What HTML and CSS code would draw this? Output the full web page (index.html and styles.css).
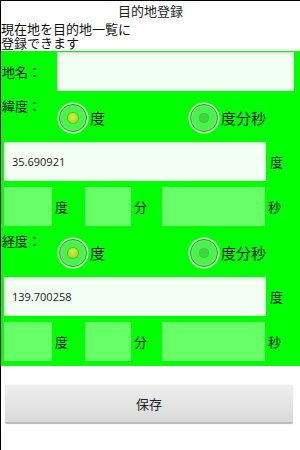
FILE: index.html
```html
<!DOCTYPE html>
<html lang="ja">
<head>
    <meta charset="UTF-8">
    <meta name="viewport" content="width=device-width, initial-scale=1.0">
    <title>目的地登録</title>
    <link rel="stylesheet" href="styles.css">
</head>
<body>
    <div class="title">目的地登録</div>
    <div class="intro">現在地を目的地一覧に<br>登録できます</div>

    <div class="form">
        <div class="name-row">
            <span class="label">地名：</span>
            <input class="field name-field" type="text">
        </div>

        <!-- 緯度 -->
        <div class="coord-head">
            <span class="label">緯度：</span>
            <div class="radios">
                <span class="radio checked"><i></i>度</span>
                <span class="radio"><i></i>度分秒</span>
            </div>
        </div>
        <div class="deg-row">
            <input class="field wide" type="text" value="35.690921">
            <span class="unit">度</span>
        </div>
        <div class="dms-row">
            <input class="box box-d" type="text">
            <span class="unit">度</span>
            <input class="box box-m" type="text">
            <span class="unit">分</span>
            <input class="box box-s" type="text">
            <span class="unit">秒</span>
        </div>

        <!-- 経度 -->
        <div class="coord-head">
            <span class="label">経度：</span>
            <div class="radios">
                <span class="radio checked"><i></i>度</span>
                <span class="radio"><i></i>度分秒</span>
            </div>
        </div>
        <div class="deg-row">
            <input class="field wide" type="text" value="139.700258">
            <span class="unit">度</span>
        </div>
        <div class="dms-row">
            <input class="box box-d" type="text">
            <span class="unit">度</span>
            <input class="box box-m" type="text">
            <span class="unit">分</span>
            <input class="box box-s" type="text">
            <span class="unit">秒</span>
        </div>
    </div>

    <div class="actions">
        <button class="save-btn">保存</button>
    </div>
</body>
</html>
```

FILE: styles.css
```css
* {
    margin: 0;
    padding: 0;
    box-sizing: border-box;
    font-family: "Noto Sans CJK JP", "Open Sans", sans-serif;
}
html, body {
    width: 300px;
    height: 450px;
    overflow: hidden;
}
body {
    background-color: #ffffff;
    color: #111111;
    border-top: 1px solid #000000;
    border-left: 1px solid #000000;
    font-size: 13px;
}
.title {
    text-align: center;
    line-height: 16px;
    padding-top: 2px;
    color: #222222;
}
.intro {
    line-height: 14px;
    padding-top: 3px;
    height: 32px;
}
.form {
    background-color: #00ff00;
    padding: 1px 6px 5px 0;
}
.label {
    padding-left: 1px;
    line-height: 13px;
}
.name-row {
    display: flex;
    align-items: center;
    height: 39px;
}
.name-row .label {
    width: 56px;
}
.field {
    height: 39px;
    border: 1px solid #d6f2d6;
    border-top-color: #c8e4c8;
    background-color: #f4fff4;
    box-shadow: inset 0 2px 2px rgba(0, 0, 0, 0.05);
    font-family: "Open Sans", sans-serif;
    font-size: 11px;
    color: #222222;
    padding-left: 7px;
    outline: none;
}
.name-field {
    flex: 1;
}
.coord-head {
    display: flex;
    height: 51px;
}
.coord-head .label {
    width: 56px;
    padding-top: 8px;
}
.radios {
    display: grid;
    grid-template-columns: 131px auto;
    padding-top: 13px;
    margin-left: 2px;
    align-items: start;
}
.radio {
    display: flex;
    align-items: center;
    gap: 3px;
    font-size: 15px;
    line-height: 28px;
    color: #111111;
}
.radio i {
    position: relative;
    width: 28px;
    height: 28px;
    border-radius: 50%;
    background-color: #4cf24c;
    border: 1.5px solid #2f952f;
    box-shadow: 0 0 0 1.5px rgba(230, 255, 230, 0.85), inset 0 0 2px rgba(255, 255, 255, 0.5);
}
.radio i::after {
    content: "";
    position: absolute;
    left: 50%;
    top: 50%;
    width: 10px;
    height: 10px;
    margin: -5px 0 0 -5px;
    border-radius: 50%;
    background-color: #3ed63e;
    box-shadow: inset 0 0 1px rgba(0, 100, 0, 0.4);
}
.radio.checked i::after {
    background: radial-gradient(circle at 45% 40%, #d8ef40, #9ccc10);
    box-shadow: 0 0 0 1px rgba(60, 130, 0, 0.4);
}
.deg-row {
    display: flex;
    align-items: center;
    padding-left: 3px;
}
.wide {
    width: 262px;
}
.unit {
    margin-left: 4px;
    width: 15px;
}
.dms-row {
    display: flex;
    align-items: center;
    padding-left: 3px;
    margin-top: 6px;
}
.box {
    height: 39px;
    background-color: #66ff66;
    border: 1px solid #7dfb7d;
    outline: none;
}
.dms-row .unit {
    margin-left: 3px;
}
.box-d { width: 48px; }
.box-m { width: 46px; margin-left: 15px; }
.box-s { width: 103px; margin-left: 13px; }
.actions {
    padding: 19px 0 0 4px;
}
.save-btn {
    width: 288px;
    height: 39px;
    border: none;
    border-radius: 2px;
    background: linear-gradient(#efefef, #d9d9d9);
    border-bottom: 2px solid #bcbcbc;
    box-shadow: 0 0 1px rgba(0, 0, 0, 0.25);
    font-size: 13px;
    color: #222222;
}
```
